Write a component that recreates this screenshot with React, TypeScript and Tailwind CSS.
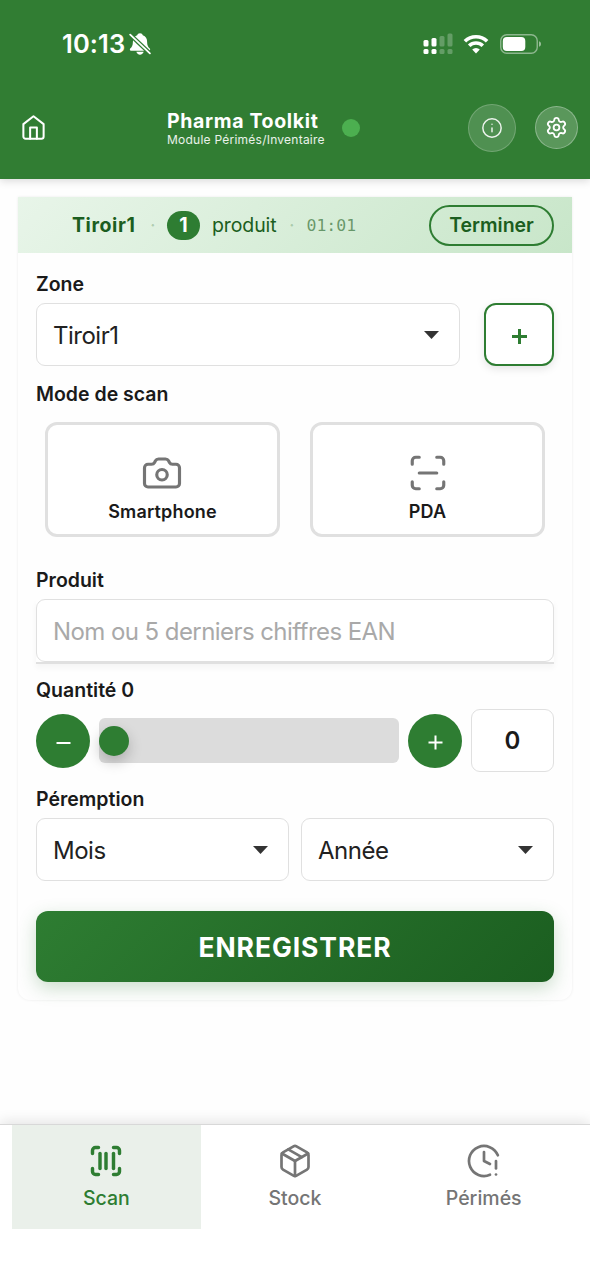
import { useState } from 'react'
import type { ReactNode } from 'react'
import { Camera, ClockAlert, Info, Package, ScanBarcode, ScanLine, Settings } from 'lucide-react'

type Tab = 'scan' | 'stock' | 'perimes'

function StatusBar() {
    return (
        <div className="flex h-[88px] items-center justify-between pl-[62px] pr-[48px] text-white">
            <div className="flex items-center gap-[4px]">
                <span className="text-[25.5px] font-semibold leading-none tracking-[0.1px]">10:13</span>
                <svg width="22" height="24" viewBox="0 0 22 24" fill="currentColor">
                    <path d="M11 1.200c-1.500 0-2.500.8-2.800 2C5.200 4.200 3.900 6.700 3.900 9.700c0 3.900-1.100 5.300-2.700 6.900-.7.8-.4 2.100.8 2.100h18c1.200 0 1.500-1.300.8-2.100-1.600-1.600-2.700-3-2.700-6.900 0-3-1.300-5.500-4.300-6.500C13.500 2 12.500 1.200 11 1.200z" />
                    <path d="M7.400 19.800h7.200c-.4 1.700-1.900 2.900-3.600 2.900s-3.200-1.200-3.600-2.900z" />
                    <path d="M1 2.500l20 19" stroke="#317d33" strokeWidth="4.400" fill="none" />
                    <path d="M1.200 2.700l19.700 18.700" stroke="currentColor" strokeWidth="1.800" strokeLinecap="round" fill="none" />
                </svg>
            </div>
            <div className="flex items-center">
                {/* Dual SIM signal */}
                <svg width="30" height="22" viewBox="0 0 30 22" fill="currentColor">
                    <rect x="0.500" y="7" width="5" height="6.500" rx="1.500" />
                    <rect x="8.500" y="5" width="5" height="8.500" rx="1.500" />
                    <rect x="16.500" y="3" width="5" height="10.500" rx="1.500" opacity="0.250" />
                    <rect x="24.500" y="0.500" width="5" height="13" rx="1.500" opacity="0.250" />
                    <rect x="0.500" y="16" width="5" height="5" rx="1.500" />
                    <rect x="8.500" y="16" width="5" height="5" rx="1.500" />
                    <rect x="16.500" y="16" width="5" height="5" rx="1.500" opacity="0.250" />
                    <rect x="24.500" y="16" width="5" height="5" rx="1.500" opacity="0.250" />
                </svg>
                <svg className="ml-[10px]" width="26" height="20" viewBox="0 0 26 20" fill="none" stroke="currentColor" strokeWidth="3.600">
                    <path d="M1.900 7.300a15.800 15.800 0 0 1 22.200 0" />
                    <path d="M6.200 11.800a9.700 9.700 0 0 1 13.600 0" />
                    <path d="M13 19.500l-3.800-3.900a5.400 5.400 0 0 1 7.600 0z" fill="currentColor" stroke="none" />
                </svg>
                <svg className="ml-[11px]" width="42" height="22" viewBox="0 0 42 22" fill="none">
                    <rect x="0.750" y="1.750" width="36.500" height="18.500" rx="6" stroke="currentColor" strokeWidth="1.400" opacity="0.450" />
                    <rect x="2.800" y="4" width="22.500" height="14" rx="4" fill="currentColor" />
                    <path d="M39 8.200c1.300.4 2 1.500 2 2.800s-.7 2.400-2 2.800z" fill="currentColor" opacity="0.500" />
                </svg>
            </div>
        </div>
    )
}

function Header() {
    return (
        <header className="h-[179px] shrink-0 bg-[#317d33] shadow-[0_2px_8px_rgba(0,0,0,0.15)]">
            <StatusBar />
            <div className="flex h-[79px] items-center pl-[19.5px] pr-3 text-white">
                <button aria-label="Accueil">
                    <svg width="27" height="27" viewBox="0 0 24 24" fill="none" stroke="currentColor" strokeWidth="1.800" strokeLinecap="round" strokeLinejoin="round">
                        <path d="M3 9l9-7 9 7v11a2 2 0 0 1-2 2H5a2 2 0 0 1-2-2z" />
                        <path d="M9 22V12h6v10" />
                    </svg>
                </button>
                <div className="ml-[120.5px] w-[157px] whitespace-nowrap pt-[2px]">
                    <h1 className="text-[19.5px] font-bold leading-[22px] tracking-[0.65px]">Pharma Toolkit</h1>
                    <p className="text-[12px] leading-4 tracking-[0.24px] text-white/90">Module Périmés/Inventaire</p>
                </div>
                <span className="ml-[18px] size-[18px] rounded-full bg-[#4caf50]" />
                <button className="ml-auto flex size-12 items-center justify-center rounded-full border-[1.5px] border-white/20 bg-white/15" aria-label="Informations">
                    <Info size={22} strokeWidth={1.6} className="mr-px text-white/90" />
                </button>
                <button className="ml-[19px] flex size-[43px] items-center justify-center rounded-full border-[1.5px] border-white/30 bg-white/20" aria-label="Paramètres">
                    <Settings size={23} strokeWidth={1.9} />
                </button>
            </div>
        </header>
    )
}

function SessionBanner() {
    return (
        <div className="flex h-[56px] items-center bg-linear-135 from-[#e8f5e9] to-[#c8e6c9] pl-[54px] pr-[18px] text-[19.5px] text-[#1b5e20]">
            <span className="w-[65px] whitespace-nowrap pt-px font-bold tracking-[0.6px]">Tiroir1</span>
            <span className="ml-[13px] w-[5px] pt-0.5 text-[#1b5e20]/25">·</span>
            <span className="ml-3 flex h-[29px] w-[33px] items-center justify-center rounded-[15px] bg-[#2e7d32] pt-px font-bold text-white">1</span>
            <span className="ml-3 w-[65px] whitespace-nowrap pt-0.5 tracking-[-0.1px]">produit</span>
            <span className="ml-[12px] w-[5px] pt-0.5 text-[#1b5e20]/25">·</span>
            <span className="ml-[12.5px] pt-0.5 font-['DejaVu_Sans_Mono',monospace] text-[16.5px] text-[#1b5e20]/60">01:01</span>
            <button className="ml-auto h-[41px] w-[125px] rounded-full border-2 border-[#2e7d32] pt-px text-[19.5px] font-semibold">
                Terminer
            </button>
        </div>
    )
}

function Label({ children }: { children: ReactNode }) {
    return <label className="block h-7 text-[19.5px] font-semibold leading-7 text-[#1a1a1a]">{children}</label>
}

function SelectBox({ value }: { value: string }) {
    return (
        <button className="flex h-[63px] min-w-0 flex-1 items-center justify-between rounded-[9px] border-[1.5px] border-[#e0e0e0] bg-white pl-[16px] pr-[20px] text-2xl tracking-[-0.5px] text-[#212121]">
            <span className="pt-0.5">{value}</span>
            <svg className="mt-px" width="15" height="8" viewBox="0 0 15 8" fill="#333333">
                <path d="M0 0h15L7.500 8z" />
            </svg>
        </button>
    )
}

function ModeCard({ icon, label }: { icon: ReactNode; label: string }) {
    return (
        <button className="flex h-[115px] flex-1 flex-col items-center rounded-xl border-[3px] border-[#e0e0e0] bg-white pt-[27px] text-[#757575]">
            {icon}
            <span className="mt-1.5 text-[18px] font-semibold leading-6 tracking-[0.15px] text-[#1a1a1a]">{label}</span>
        </button>
    )
}

function RoundButton({ children, label, onClick }: { children: ReactNode; label: string; onClick: () => void }) {
    return (
        <button onClick={onClick} aria-label={label} className="flex size-[54px] shrink-0 items-center justify-center rounded-full bg-[#2e7d32] pt-[3px] text-white">
            {children}
        </button>
    )
}

function ScanForm() {
    const [quantity, setQuantity] = useState(0)

    return (
        <section className="mx-[18px] mt-[18px] h-[803px] rounded-b-xl shadow-[0_0_3px_rgba(0,0,0,0.08)]">
            <SessionBanner />
            <div className="px-[18px] pt-[17px]">
                {/* Zone */}
                <Label>Zone</Label>
                <div className="mt-[5px] flex gap-6">
                    <SelectBox value="Tiroir1" />
                    <button className="flex h-[63px] w-[70px] items-center justify-center rounded-xl border-2 border-[#2e7d32] bg-white shadow-[0_3px_9px_rgba(0,0,0,0.1)]" aria-label="Ajouter une zone">
                        <svg className="mt-[3px]" width="15" height="15" viewBox="0 0 15 15" stroke="#2e7d32" strokeWidth="3">
                            <path d="M7.500 0v15M0 7.500h15" />
                        </svg>
                    </button>
                </div>

                {/* Mode de scan */}
                <div className="mt-[14px]">
                    <Label>Mode de scan</Label>
                </div>
                <div className="mt-[14px] flex gap-[30px] px-[9px]">
                    <ModeCard icon={<Camera size={42} strokeWidth={1.8} className="mr-px" />} label="Smartphone" />
                    <ModeCard icon={<ScanLine size={42} strokeWidth={1.8} />} label="PDA" />
                </div>

                {/* Produit */}
                <div className="mt-[29px]">
                    <Label>Produit</Label>
                </div>
                <div className="mt-[5px] border-b-2 border-[#e0e0e0] shadow-[0_4px_6px_rgba(0,0,0,0.04)]">
                    <input
                        className="block h-[63px] w-full rounded-[9px] border-[1.5px] border-[#e0e0e0] bg-white px-[16px] pt-0.5 text-2xl tracking-[-0.57px] outline-none placeholder:text-[#a9a9a9]"
                        placeholder="Nom ou 5 derniers chiffres EAN"
                    />
                </div>

                {/* Quantité */}
                <div className="mt-[12px]">
                    <Label>Quantité {quantity}</Label>
                </div>
                <div className="mt-[5px] flex items-center gap-[9px]">
                    <RoundButton label="Diminuer" onClick={() => setQuantity(q => Math.max(0, q - 1))}>
                        <svg width="15" height="15" viewBox="0 0 15 15" stroke="currentColor" strokeWidth="2">
                            <path d="M0.500 8h14" />
                        </svg>
                    </RoundButton>
                    <div className="flex h-[45px] flex-1 items-center rounded-md bg-[#dcdcdc]">
                        <span className="size-[30px] rounded-full bg-[#2e7d32] shadow-[0_6px_14px_rgba(0,0,0,0.22)]" />
                    </div>
                    <RoundButton label="Augmenter" onClick={() => setQuantity(q => q + 1)}>
                        <svg width="15" height="15" viewBox="0 0 15 15" stroke="currentColor" strokeWidth="2">
                            <path d="M7.500 0.500v14M0.500 7.500h14" />
                        </svg>
                    </RoundButton>
                    <div className="flex h-[63px] w-[83px] items-center justify-center rounded-[9px] border-[1.5px] border-[#e0e0e0] bg-white pt-px text-2xl font-semibold text-[#1a1a1a]">
                        {quantity}
                    </div>
                </div>

                {/* Péremption */}
                <div className="mt-[13px]">
                    <Label>Péremption</Label>
                </div>
                <div className="mt-[5px] flex gap-3">
                    <SelectBox value="Mois" />
                    <SelectBox value="Année" />
                </div>

                <button className="mt-[30px] h-[71px] w-full rounded-xl bg-linear-135 from-[#2e7d32] to-[#1b5e20] pt-[3px] text-[26.5px] font-bold tracking-[0.9px] text-white shadow-[0_6px_18px_rgba(46,125,50,0.25)]">
                    ENREGISTRER
                </button>
            </div>
        </section>
    )
}

const tabs: { id: Tab; label: string; icon: ReactNode }[] = [
    { id: 'scan', label: 'Scan', icon: <ScanBarcode size={36} strokeWidth={2.3} /> },
    { id: 'stock', label: 'Stock', icon: <Package size={36} strokeWidth={1.8} /> },
    { id: 'perimes', label: 'Périmés', icon: <ClockAlert size={36} strokeWidth={1.8} /> },
]

function BottomNav() {
    const [active, setActive] = useState<Tab>('scan')

    return (
        <nav className="mt-auto flex h-[156px] shrink-0 border-t border-[#d8d8d8] bg-white px-3 shadow-[0_-3px_12px_rgba(0,0,0,0.1)]">
            {tabs.map(tab => (
                <button
                    key={tab.id}
                    onClick={() => setActive(tab.id)}
                    className={`flex h-[104px] flex-1 flex-col items-center pt-[18px] text-[19.5px] font-medium ${active === tab.id ? 'bg-[#eaf0ea] text-[#2e7d32]' : 'text-[#757575]'}`}
                >
                    {tab.icon}
                    <span className="mt-[5px] leading-7">{tab.label}</span>
                </button>
            ))}
        </nav>
    )
}

export default function App() {
    return (
        <div className="flex h-screen w-full flex-col overflow-hidden bg-[#fefefe] font-['Inter',sans-serif]">
            <Header />
            <ScanForm />
            <BottomNav />
        </div>
    )
}
